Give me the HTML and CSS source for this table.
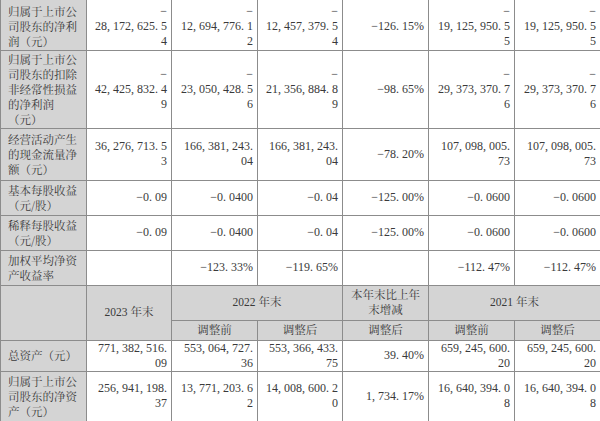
FILE: index.html
```html
<!DOCTYPE html>
<html lang="zh-CN">
<head>
<meta charset="utf-8">
<link rel="stylesheet" href="styles.css">
</head>
<body>
<table class="fin">
  <colgroup>
    <col class="c86"><col class="c85"><col class="c86"><col class="c85"><col class="c86"><col class="c86"><col class="c86">
  </colgroup>
  <tbody>
    <tr class="r1">
      <td class="lbl">归属于上市公<br>司股东的净利<br>润（元）</td>
      <td class="num">−<br>28, 172, 625. 5<br>4</td>
      <td class="num">−<br>12, 694, 776. 1<br>2</td>
      <td class="num">−<br>12, 457, 379. 5<br>4</td>
      <td class="num">−126. 15%</td>
      <td class="num">−<br>19, 125, 950. 5<br>5</td>
      <td class="num">−<br>19, 125, 950. 5<br>5</td>
    </tr>
    <tr class="r2">
      <td class="lbl">归属于上市公<br>司股东的扣除<br>非经常性损益<br>的净利润<br>（元）</td>
      <td class="num">−<br>42, 425, 832. 4<br>9</td>
      <td class="num">−<br>23, 050, 428. 5<br>6</td>
      <td class="num">−<br>21, 356, 884. 8<br>9</td>
      <td class="num">−98. 65%</td>
      <td class="num">−<br>29, 373, 370. 7<br>6</td>
      <td class="num">−<br>29, 373, 370. 7<br>6</td>
    </tr>
    <tr class="r3">
      <td class="lbl">经营活动产生<br>的现金流量净<br>额（元）</td>
      <td class="num">36, 276, 713. 5<br>3</td>
      <td class="num">166, 381, 243.<br>04</td>
      <td class="num">166, 381, 243.<br>04</td>
      <td class="num">−78. 20%</td>
      <td class="num">107, 098, 005.<br>73</td>
      <td class="num">107, 098, 005.<br>73</td>
    </tr>
    <tr class="r4">
      <td class="lbl">基本每股收益<br>（元/股）</td>
      <td class="num">−0. 09</td>
      <td class="num">−0. 0400</td>
      <td class="num">−0. 04</td>
      <td class="num">−125. 00%</td>
      <td class="num">−0. 0600</td>
      <td class="num">−0. 0600</td>
    </tr>
    <tr class="r4">
      <td class="lbl">稀释每股收益<br>（元/股）</td>
      <td class="num">−0. 09</td>
      <td class="num">−0. 0400</td>
      <td class="num">−0. 04</td>
      <td class="num">−125. 00%</td>
      <td class="num">−0. 0600</td>
      <td class="num">−0. 0600</td>
    </tr>
    <tr class="r4">
      <td class="lbl">加权平均净资<br>产收益率</td>
      <td class="num"></td>
      <td class="num">−123. 33%</td>
      <td class="num">−119. 65%</td>
      <td class="num"></td>
      <td class="num">−112. 47%</td>
      <td class="num">−112. 47%</td>
    </tr>
    <tr class="h1">
      <td class="hd" rowspan="2"></td>
      <td class="hd" rowspan="2">2023 年末</td>
      <td class="hd" colspan="2">2022 年末</td>
      <td class="hd">本年末比上年<br>末增减</td>
      <td class="hd" colspan="2">2021 年末</td>
    </tr>
    <tr class="h2">
      <td class="hd">调整前</td>
      <td class="hd">调整后</td>
      <td class="hd">调整后</td>
      <td class="hd">调整前</td>
      <td class="hd">调整后</td>
    </tr>
    <tr class="r7">
      <td class="lbl">总资产（元）</td>
      <td class="num">771, 382, 516.<br>09</td>
      <td class="num">553, 064, 727.<br>36</td>
      <td class="num">553, 366, 433.<br>75</td>
      <td class="num">39. 40%</td>
      <td class="num">659, 245, 600.<br>20</td>
      <td class="num">659, 245, 600.<br>20</td>
    </tr>
    <tr class="r8">
      <td class="lbl">归属于上市公<br>司股东的净资<br>产（元）</td>
      <td class="num">256, 941, 198.<br>37</td>
      <td class="num">13, 771, 203. 6<br>2</td>
      <td class="num">14, 008, 600. 2<br>0</td>
      <td class="num">1, 734. 17%</td>
      <td class="num">16, 640, 394. 0<br>8</td>
      <td class="num">16, 640, 394. 0<br>8</td>
    </tr>
  </tbody>
</table>
</body>
</html>
```

FILE: styles.css
```css
html, body {
  margin: 0;
  padding: 0;
  background: #ffffff;
}

body {
  width: 600px;
  height: 421px;
  overflow: hidden;
  color: #3a3a3a;
  font-family: "Liberation Serif", "Noto Serif CJK SC", "Noto Sans CJK SC", serif;
}

.fin {
  width: 600px;
  table-layout: fixed;
  border-collapse: collapse;
}

.c86 { width: 86px; }
.c85 { width: 85px; }

.fin td {
  border: 1px solid #8c8c8c;
  padding: 0;
  vertical-align: middle;
  line-height: 15px;
  white-space: nowrap;
  overflow: hidden;
}

.fin tr.r1 td {
  border-top: 0;
  padding-top: 3px;
}

.lbl {
  background: #d4d4d4;
  text-align: left;
  padding-left: 7px !important;
  font-size: 11.5px;
  font-family: "Noto Serif CJK SC", "Noto Sans CJK SC", sans-serif;
}

.num {
  text-align: right;
  padding-right: 4px !important;
  font-size: 12px;
}

.hd {
  background: #d4d4d4;
  text-align: center;
  font-size: 11.5px;
  font-family: "Liberation Serif", "Noto Serif CJK SC", "Noto Sans CJK SC", serif;
}

.r1 { height: 50px; }
.r2 { height: 78px; }
.r3 { height: 52px; }
.r4 { height: 35px; }
.h1 { height: 35px; }
.h2 { height: 20px; }
.r7 { height: 30px; }
.r8 { height: 50px; }
```
